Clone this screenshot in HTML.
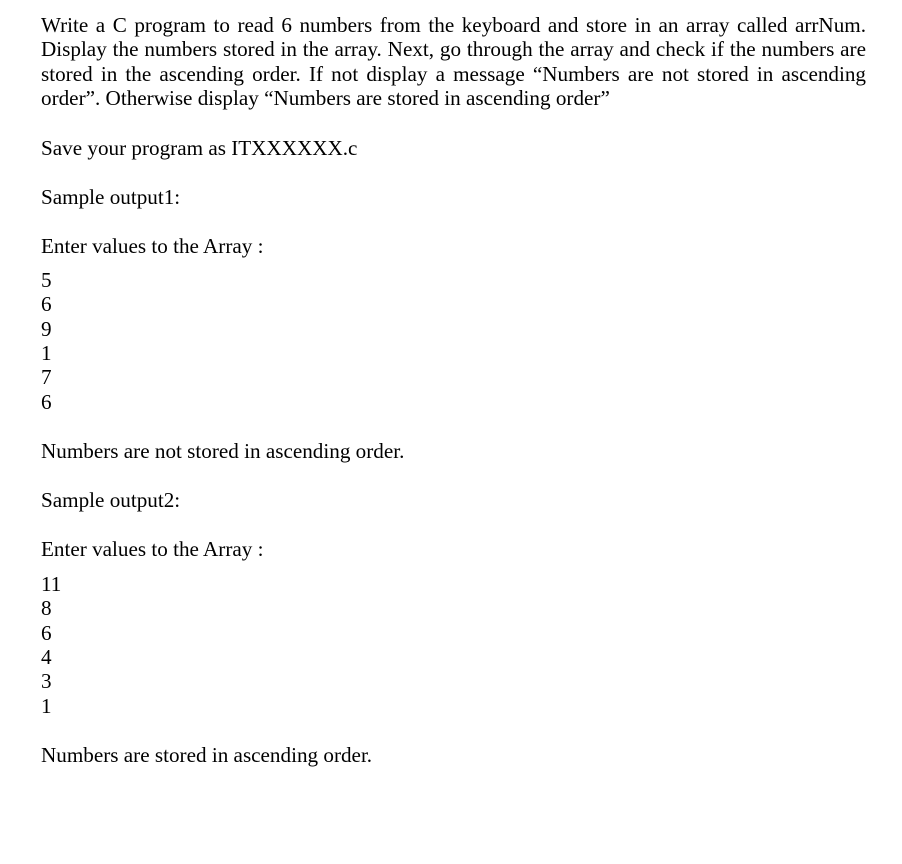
<!DOCTYPE html>
<html><head><meta charset="utf-8"><style>
body{margin:0;background:#fff;width:902px;height:864px;position:relative;overflow:hidden;font-family:"Liberation Serif",serif;font-size:21.15px;color:#000}
.l{position:absolute;left:41px;line-height:24.4px;white-space:nowrap}
.p{position:absolute;left:41px;top:13px;width:825px;line-height:24.4px;text-align:justify;text-align-last:left}
</style></head><body>
<div class="p">Write a C program to read 6 numbers from the keyboard and store in an array called arrNum. Display the numbers stored in the array. Next, go through the array and check if the numbers are stored in the ascending order. If not display a message “Numbers are not stored in ascending order”. Otherwise display “Numbers are stored in ascending order”</div>
<div class="l" style="top:135.5px">Save your program as ITXXXXXX.c</div>
<div class="l" style="top:184.5px">Sample output1:</div>
<div class="l" style="top:233.5px">Enter values to the Array :</div>
<div class="l" style="top:267.5px">5</div>
<div class="l" style="top:291.5px">6</div>
<div class="l" style="top:316.5px">9</div>
<div class="l" style="top:340.5px">1</div>
<div class="l" style="top:364.5px">7</div>
<div class="l" style="top:389.5px">6</div>
<div class="l" style="top:438.5px">Numbers are not stored in ascending order.</div>
<div class="l" style="top:487.5px">Sample output2:</div>
<div class="l" style="top:536.5px">Enter values to the Array :</div>
<div class="l" style="top:571.5px">11</div>
<div class="l" style="top:595.5px">8</div>
<div class="l" style="top:620.5px">6</div>
<div class="l" style="top:644.5px">4</div>
<div class="l" style="top:668.5px">3</div>
<div class="l" style="top:693.5px">1</div>
<div class="l" style="top:742.5px">Numbers are stored in ascending order.</div>
</body></html>
